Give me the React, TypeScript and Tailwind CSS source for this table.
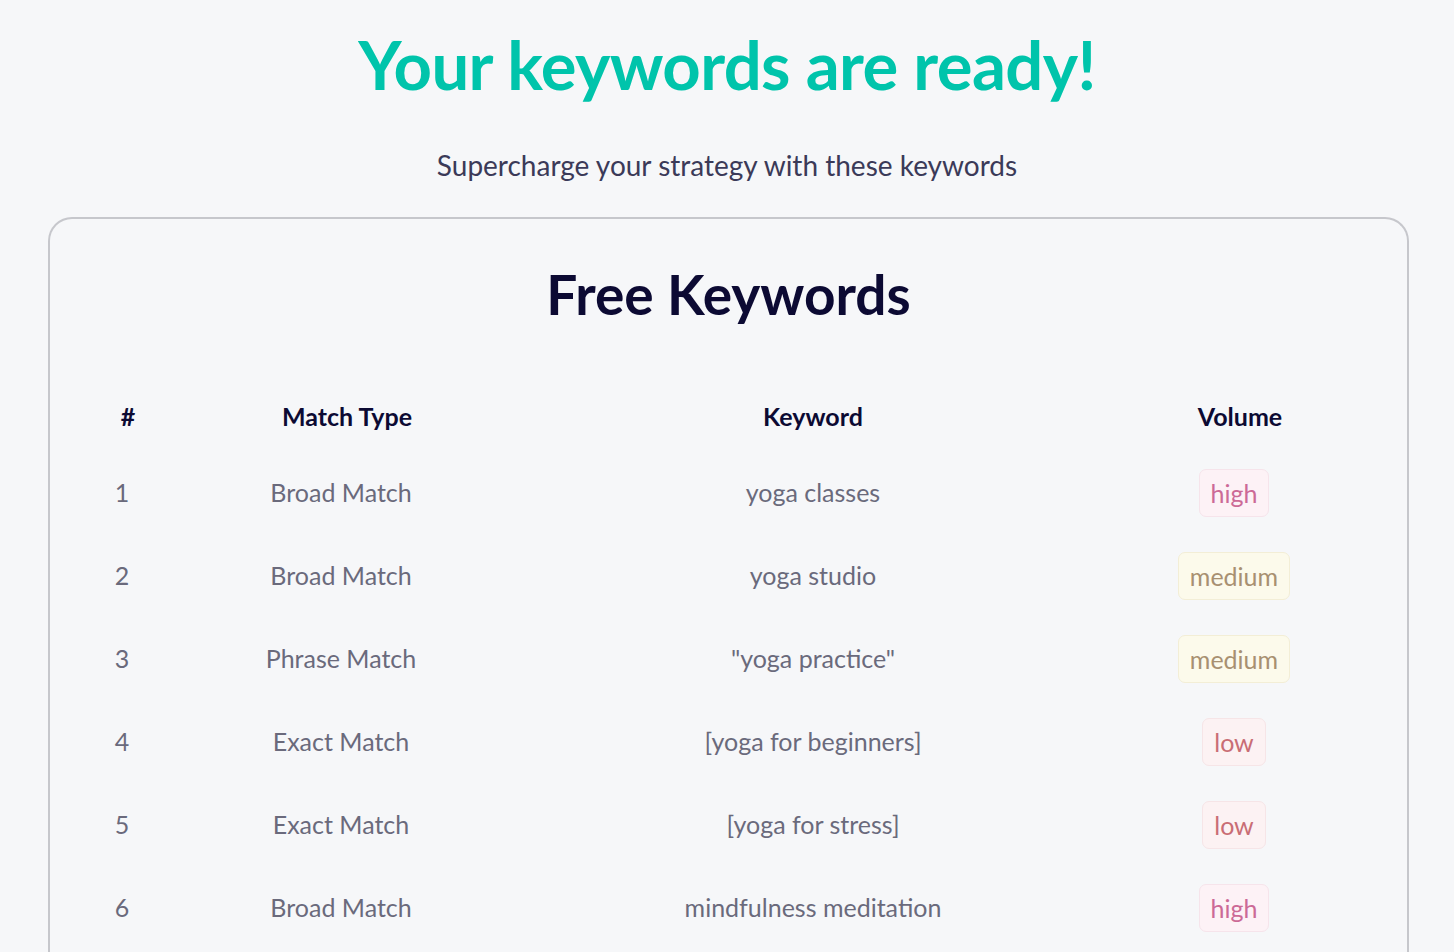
const rows = [
  { n: 1, type: "Broad Match", keyword: "yoga classes", volume: "high" },
  { n: 2, type: "Broad Match", keyword: "yoga studio", volume: "medium" },
  { n: 3, type: "Phrase Match", keyword: '"yoga practice"', volume: "medium" },
  { n: 4, type: "Exact Match", keyword: "[yoga for beginners]", volume: "low" },
  { n: 5, type: "Exact Match", keyword: "[yoga for stress]", volume: "low" },
  { n: 6, type: "Broad Match", keyword: "mindfulness meditation", volume: "high" },
];

const badge: Record<string, string> = {
  high: "bg-[#fdf2f6] border-[#f6e4eb] text-[#cc6a96]",
  medium: "bg-[#fcfaeb] border-[#f3eed6] text-[#a89071]",
  low: "bg-[#fcf2f3] border-[#f6e5e7] text-[#c96d75]",
};

const cols = "grid grid-cols-[108px_330px_614px_228px] items-center";

export default function App() {
  return (
    <div className="min-h-screen bg-[#f6f7f9] font-['Lato','Noto_Sans',sans-serif] overflow-hidden">
      <div className="flex flex-col items-center pt-[22px]">
        <h1 className="text-[67px] leading-[84px] font-bold text-[#00c4ab] tracking-[-0.6px]">
          Your keywords are ready!
        </h1>
        <p className="mt-[41px] text-[28px] leading-[36px] text-[#3b3a58]">
          Supercharge your strategy with these keywords
        </p>
      </div>
      <div className="ml-[48px] mr-[45px] mt-[34px] rounded-t-[24px] border-2 border-b-0 border-[#c6c7cc] pb-10">
        <h2 className="mt-[40px] text-center text-[55px] leading-[70px] font-bold text-[#0c0a33]">
          Free Keywords
        </h2>
        <div className="ml-[18px] mt-[64px]">
          <div className={`${cols} h-[48px] text-[25px] font-bold text-[#0c0a33]`}>
            <div className="text-center pl-3">#</div>
            <div className="text-center pl-3">Match Type</div>
            <div className="text-center">Keyword</div>
            <div className="text-center pl-3">Volume</div>
          </div>
          <div className="mt-[10px] flex flex-col">
            {rows.map((r) => (
              <div key={r.n} className={`${cols} h-[83px] text-[25px] text-[#6a6a7c]`}>
                <div className="text-center">{r.n}</div>
                <div className="text-center">{r.type}</div>
                <div className="text-center">{r.keyword}</div>
                <div className="flex justify-center">
                  <span
                    className={`rounded-[7px] border px-[11px] h-[48px] leading-[46px] ${badge[r.volume]}`}
                  >
                    {r.volume}
                  </span>
                </div>
              </div>
            ))}
          </div>
        </div>
      </div>
    </div>
  );
}
